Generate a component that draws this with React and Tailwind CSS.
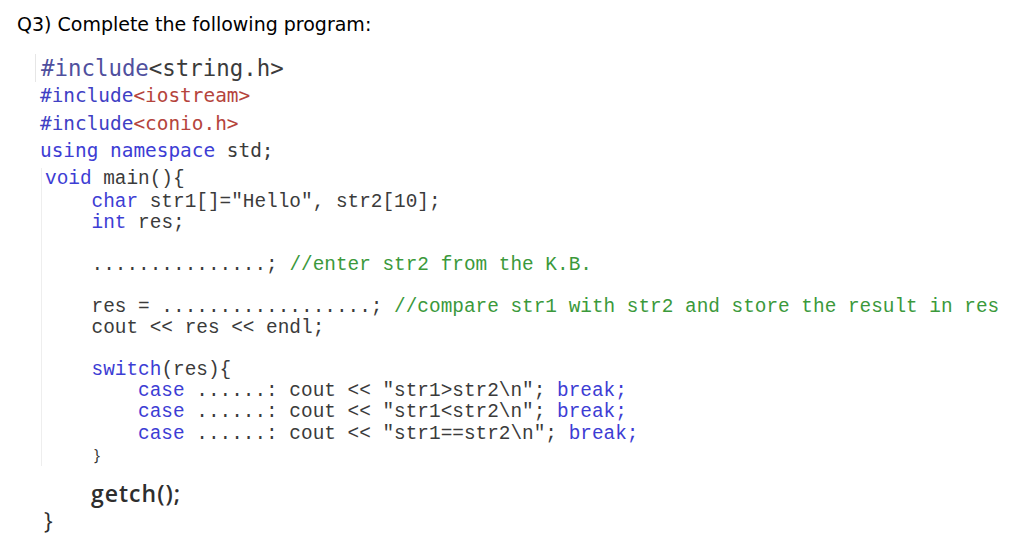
import React from 'react';

const blue = 'text-[#3d3dd4]';
const dark = 'text-[#3b3b3b]';
const green = 'text-[#3b993b]';
const red = 'text-[#b5443c]';

// one line of the Courier-like listing
const Line = ({ children }) => (
  <div className="h-[21.1px] leading-[21.1px] whitespace-pre">{children}</div>
);

const App = () => {
  return (
    <div className="w-[1026px] h-[549px] bg-white overflow-hidden">
      {/* Question title */}
      <div className="h-[48px] leading-[48px] pl-[17px] text-[19px] text-black font-['DejaVu_Sans',sans-serif]">
        Q3) Complete the following program:
      </div>

      {/* header lines, Consolas-like */}
      <div className="mt-[6px] font-['DejaVu_Sans_Mono',monospace]">
        <div className="ml-[35px] pl-[5px] h-[28px] leading-[28px] text-[22.4px] border-l border-[#e6e6e6] whitespace-pre">
          <span className="text-[#50509e]">#include</span>
          <span className={dark}>&lt;string.h&gt;</span>
        </div>
        <div className="ml-[40px] h-[28px] leading-[28px] text-[19.4px] whitespace-pre">
          <span className="text-[#4040c4]">#include</span>
          <span className={red}>&lt;iostream&gt;</span>
        </div>
        <div className="ml-[40px] h-[27px] leading-[27px] text-[19.4px] whitespace-pre">
          <span className="text-[#4040c4]">#include</span>
          <span className={red}>&lt;conio.h&gt;</span>
        </div>
        <div className="ml-[40px] h-[27px] leading-[27px] text-[19.4px] whitespace-pre">
          <span className={blue}>using namespace</span>
          <span className={dark}> std;</span>
        </div>
      </div>

      {/* main body, Courier-like */}
      <div className="mt-[4px] ml-[41px] pl-[3px] border-l border-[#eeeeee] font-['Liberation_Mono',monospace] text-[19.4px]">
        <div className="h-[23.5px] leading-[23.5px] whitespace-pre">
          <span className={blue}>void</span>
          <span className={dark}> main(){'{'}</span>
        </div>
        <Line>
          <span className={blue}>    char</span>
          <span className={dark}> str1[]="Hello", str2[10];</span>
        </Line>
        <Line>
          <span className={blue}>    int</span>
          <span className={dark}> res;</span>
        </Line>
        <Line> </Line>
        <Line>
          <span className={dark}>    ...............; </span>
          <span className={green}>//enter str2 from the K.B.</span>
        </Line>
        <Line> </Line>
        <Line>
          <span className={dark}>    res = ..................; </span>
          <span className={green}>//compare str1 with str2 and store the result in res</span>
        </Line>
        <Line>
          <span className={dark}>    cout &lt;&lt; res &lt;&lt; endl;</span>
        </Line>
        <Line> </Line>
        <Line>
          <span className={blue}>    switch</span>
          <span className={dark}>(res){'{'}</span>
        </Line>
        <Line>
          <span className={blue}>        case</span>
          <span className={dark}> ......: cout &lt;&lt; "str1&gt;str2\n"; </span>
          <span className={blue}>break;</span>
        </Line>
        <Line>
          <span className={blue}>        case</span>
          <span className={dark}> ......: cout &lt;&lt; "str1&lt;str2\n"; </span>
          <span className={blue}>break;</span>
        </Line>
        <Line>
          <span className={blue}>        case</span>
          <span className={dark}> ......: cout &lt;&lt; "str1==str2\n"; </span>
          <span className={blue}>break;</span>
        </Line>
        <div className="h-[21px] leading-[21px] pl-[49px] text-[16px] font-['Open_Sans',sans-serif] text-[#333]">
          {'}'}
        </div>
      </div>

      {/* trailing lines, Calibri-like */}
      <div className="font-['Open_Sans',sans-serif] text-[#2e2e2e]">
        <div className="mt-[14px] h-[26px] leading-[26px] pl-[91px] text-[23px] font-semibold tracking-[1px]">getch();</div>
        <div className="h-[28px] leading-[28px] pl-[44px] text-[23px]">{'}'}</div>
      </div>
    </div>
  );
};

export default App;
